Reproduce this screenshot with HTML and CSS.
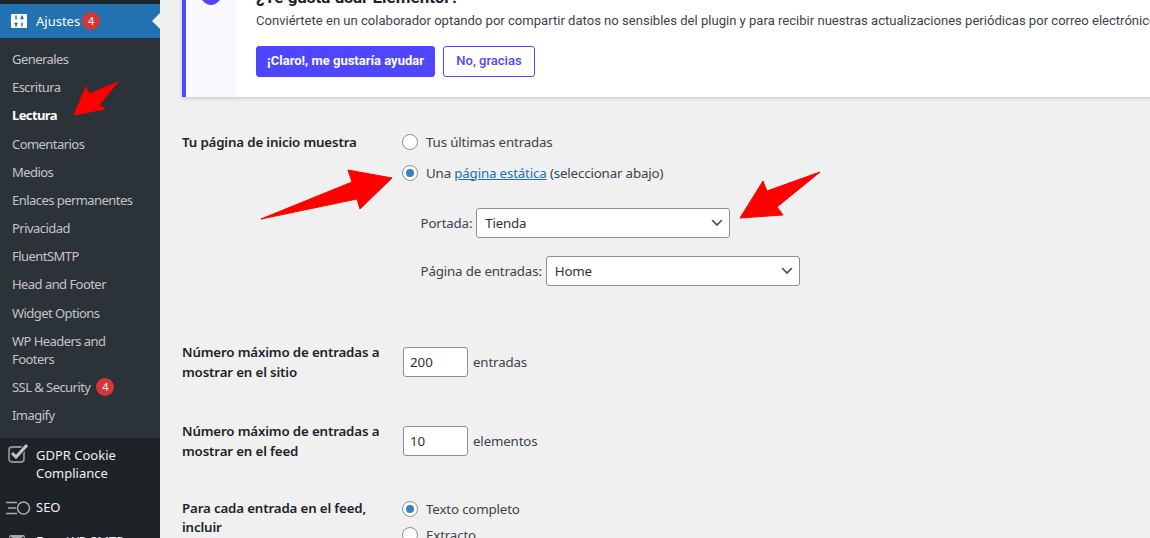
FILE: index.html
```html
<!DOCTYPE html>
<html lang="es">
<head>
<meta charset="utf-8">
<title>Ajustes de lectura</title>
<link rel="stylesheet" href="styles.css">
</head>
<body>
<div class="app">
  <nav class="sidebar">
    <div class="topcap"></div>
    <div class="menu-current">
      <svg class="ico-settings" viewBox="0 0 16 16" width="16" height="16"><rect y="1" width="16" height="14" rx="1" fill="#fff"/><path d="M5 2.500v4M5 9.500v4M11 2.500v4M11 9.500v4" stroke="#2271b1" stroke-width="1.400"/><path d="M3 10h4l-2 3.500zM9 6h4l-2-3.500z" fill="#2271b1"/></svg>
      <span>Ajustes</span><span class="badge">4</span>
      <span class="pointer"></span>
    </div>
    <ul class="submenu">
      <li>Generales</li>
      <li>Escritura</li>
      <li class="current">Lectura</li>
      <li>Comentarios</li>
      <li>Medios</li>
      <li>Enlaces permanentes</li>
      <li>Privacidad</li>
      <li>FluentSMTP</li>
      <li>Head and Footer</li>
      <li>Widget Options</li>
      <li>WP Headers and Footers</li>
      <li>SSL &amp; Security<span class="badge">4</span></li>
      <li>Imagify</li>
    </ul>
    <ul class="mainmenu">
      <li>
        <svg viewBox="0 0 20 20" width="20" height="20"><rect x="1" y="3" width="15" height="15" rx="3" fill="none" stroke="#8c8f94" stroke-width="1.800"/><path d="M4 9l4 4L19 1" fill="none" stroke="#1d2327" stroke-width="5"/><path d="M4 9l4 4L19 1" fill="none" stroke="#c3c4c7" stroke-width="3"/></svg>
        <span>GDPR Cookie Compliance</span>
      </li>
      <li>
        <svg viewBox="0 0 26 16" width="26" height="16" class="ico-seo"><path d="M0 2.500h11M2 8h8M0 13.500h11" stroke="#a7aaad" stroke-width="1.400"/><circle cx="17.500" cy="8" r="6" fill="none" stroke="#a7aaad" stroke-width="1.600"/></svg>
        <span>SEO</span>
      </li>
      <li>
        <svg viewBox="0 0 20 20" width="20" height="20"><rect x="1" y="5" width="16" height="13" rx="2" fill="#a7aaad"/><path d="M2 7l7 5 7-5" fill="none" stroke="#1d2327" stroke-width="1.500"/></svg>
        <span>Easy WP SMTP</span>
      </li>
    </ul>
  </nav>

  <main class="content">
    <section class="notice">
      <div class="notice-icon"><span class="notice-dot"></span></div>
      <div class="notice-body">
        <h3>¿Te gusta usar Elementor?</h3>
        <p>Conviértete en un colaborador optando por compartir datos no sensibles del plugin y para recibir nuestras actualizaciones periódicas por correo electrónico.</p>
        <div class="notice-actions">
          <a class="btn btn-primary">¡Claro!, me gustaría ayudar</a>
          <a class="btn btn-outline">No, gracias</a>
        </div>
      </div>
    </section>

    <form class="settings">
      <div class="row row-front">
        <div class="th">Tu página de inicio muestra</div>
        <div class="td">
          <label class="radio-line"><input type="radio" name="front"><span>Tus últimas entradas</span></label>
          <label class="radio-line"><input type="radio" name="front" checked><span>Una <a class="link">página estática</a> (seleccionar abajo)</span></label>
          <div class="pick pick-first"><span>Portada:</span><select><option>Tienda</option></select></div>
          <div class="pick pick-second"><span>Página de entradas:</span><select><option>Home</option></select></div>
        </div>
      </div>
      <div class="row row-posts">
        <div class="th">Número máximo de entradas a mostrar en el sitio</div>
        <div class="td num"><input type="text" value="200"><span>entradas</span></div>
      </div>
      <div class="row row-feed">
        <div class="th">Número máximo de entradas a mostrar en el feed</div>
        <div class="td num"><input type="text" value="10"><span>elementos</span></div>
      </div>
      <div class="row row-include">
        <div class="th">Para cada entrada en el feed, incluir</div>
        <div class="td">
          <label class="radio-line tight"><input type="radio" name="inc" checked><span>Texto completo</span></label>
          <label class="radio-line tight"><input type="radio" name="inc"><span>Extracto</span></label>
        </div>
      </div>
    </form>
  </main>
</div>

<svg class="arrows" viewBox="0 0 1150 538" width="1150" height="538" aria-hidden="true">
  <path d="M118 82L99 105L105 109L74 115L86 87L89 94Z" fill="#fe0000" stroke="#fe0000" stroke-linejoin="round"/>
  <path d="M261 219L352 182L348 170L392 178L360 209L357 199Z" fill="#fe0000" stroke="#fe0000" stroke-linejoin="round"/>
  <path d="M820 172L767 191L763 181L740 218L783 215L777 207Z" fill="#fe0000" stroke="#fe0000" stroke-linejoin="round"/>
</svg>
</body>
</html>
```
FILE: styles.css
```css
* { box-sizing: border-box; }
html, body { margin: 0; height: 538px; overflow: hidden; }
body {
  background: #f0f0f1;
  color: #3c434a;
  font: 13px/1.4 "Noto Sans", "Open Sans", sans-serif;
  position: relative;
}
ul { list-style: none; margin: 0; padding: 0; }

.app { display: flex; height: 538px; overflow: hidden; }

/* Sidebar */
.sidebar { width: 160px; flex: none; background: #1d2327; color: #f0f0f1; overflow: hidden; }
.topcap { height: 4px; }
.menu-current {
  position: relative;
  height: 34px;
  background: #2271b1;
  color: #fff;
  display: flex;
  align-items: center;
  padding-left: 11px;
}
.ico-settings { margin-right: 9px; flex: none; }
.badge {
  display: inline-flex;
  width: 18px;
  height: 18px;
  margin-left: 2px;
  border-radius: 50%;
  background: #d63638;
  color: #fff;
  font-size: 11px;
  line-height: 18px;
  align-items: center;
  justify-content: center;
  letter-spacing: 0;
}
.pointer {
  position: absolute;
  right: 0;
  top: 50%;
  margin-top: -8px;
  border: 8px solid transparent;
  border-right-color: #f0f0f1;
}
.submenu { background: #2c3338; padding: 7.15px 0 8.75px; color: #c3c4c7; letter-spacing: -0.55px; }
.submenu li { padding: 5px 12px; line-height: 18.15px; display: block; }
.submenu li .badge { vertical-align: top; margin-left: 6px; }
.submenu li.current { color: #fff; font-weight: 700; letter-spacing: -0.6px; }
.mainmenu li { display: flex; padding: 8px 12px 8px 36px; position: relative; line-height: 18px; }
.mainmenu svg { position: absolute; left: 8px; top: 6px; }
.mainmenu svg.ico-seo { left: 6px; top: 10px; }

/* Main */
.content { flex: 1; min-width: 0; padding-left: 22px; overflow: hidden; }

.notice {
  display: flex;
  height: 117px;
  margin: -20px -60px 0 0;
  background: #fff;
  border-left: 4px solid #5046ff;
  box-shadow: 0 1px 4px rgba(0, 0, 0, .2);
  font-family: Roboto, sans-serif;
}
.notice-icon { width: 50px; flex: none; background: #f9f9ff; padding: 0 0 0 14px; }
.notice-dot { display: block; width: 22px; height: 25px; border-radius: 50%; background: #5046ff; }
.notice-body { padding-left: 20px; white-space: nowrap; }
.notice-body h3 { margin: 0; font-size: 17px; line-height: 20px; height: 24px; padding-top: 7px; font-weight: 700; color: #1d2327; }
.notice-body p { margin: 7px 0 0; font-size: 13.07px; line-height: 20px; color: #3c434a; height: 35px; }
.notice-actions { display: flex; gap: 8px; }
.btn {
  height: 31px;
  display: flex;
  align-items: center;
  justify-content: center;
  border-radius: 3px;
  font-size: 13px;
  border: 1px solid #5046ff;
}
.btn-primary { width: 179px; background: #5046ff; color: #fff; font-weight: 700; }
.btn-outline { width: 92px; background: #fff; color: #5046ff; font-weight: 500; }

.settings { font-size: 13.3px; letter-spacing: -0.15px; }
.row { display: grid; grid-template-columns: 220px 1fr; }
.th { font-weight: 600; color: #1d2327; line-height: 20px; width: 200px; }
.row-front { margin-top: 34px; }
.row-front .th { padding-top: 1px; }
.row-posts { margin-top: 56px; }
.row-feed { margin-top: 39px; }
.row-include { margin-top: 38px; }
.row-include .th { line-height: 19px; }

.radio-line { display: flex; align-items: center; height: 22px; margin-bottom: 9px; }
.radio-line.tight { height: 20px; margin-bottom: 6px; }
input[type="radio"] {
  appearance: none;
  width: 16px;
  height: 16px;
  margin: 0 8px 0 0;
  border: 1px solid #8c8f94;
  border-radius: 50%;
  background: #fff;
  flex: none;
  display: grid;
  place-items: center;
}
input[type="radio"]:checked::before {
  content: "";
  width: 8px;
  height: 8px;
  border-radius: 50%;
  background: #3582c4;
}
.link { color: #2271b1; text-decoration: underline; }

.pick { display: flex; align-items: center; gap: 4px; padding-left: 18.5px; }
.pick-first { margin-top: 24px; }
.pick-second { margin-top: 18px; }
select {
  appearance: none;
  width: 254px;
  height: 30px;
  border: 1px solid #8c8f94;
  border-radius: 3px;
  background: #fff url("data:image/svg+xml;charset=utf-8,%3Csvg xmlns='http://www.w3.org/2000/svg' width='20' height='20'%3E%3Cpath d='M5 6l5 5 5-5 2 1-7 7-7-7z' fill='%23555'/%3E%3C/svg%3E") no-repeat right 4px top 50%;
  background-size: 16px 16px;
  color: #2c3338;
  font: inherit;
  letter-spacing: -0.2px;
  padding: 0 24px 0 8px;
}
.num { display: flex; align-items: center; gap: 5px; height: 30px; margin-top: 5px; padding-left: 1px; }
input[type="text"] {
  width: 65px;
  height: 30px;
  border: 1px solid #8c8f94;
  border-radius: 3px;
  background: #fff;
  color: #2c3338;
  font: inherit;
  padding: 0 6px;
}

.arrows { position: absolute; left: 0; top: 0; pointer-events: none; }
```
